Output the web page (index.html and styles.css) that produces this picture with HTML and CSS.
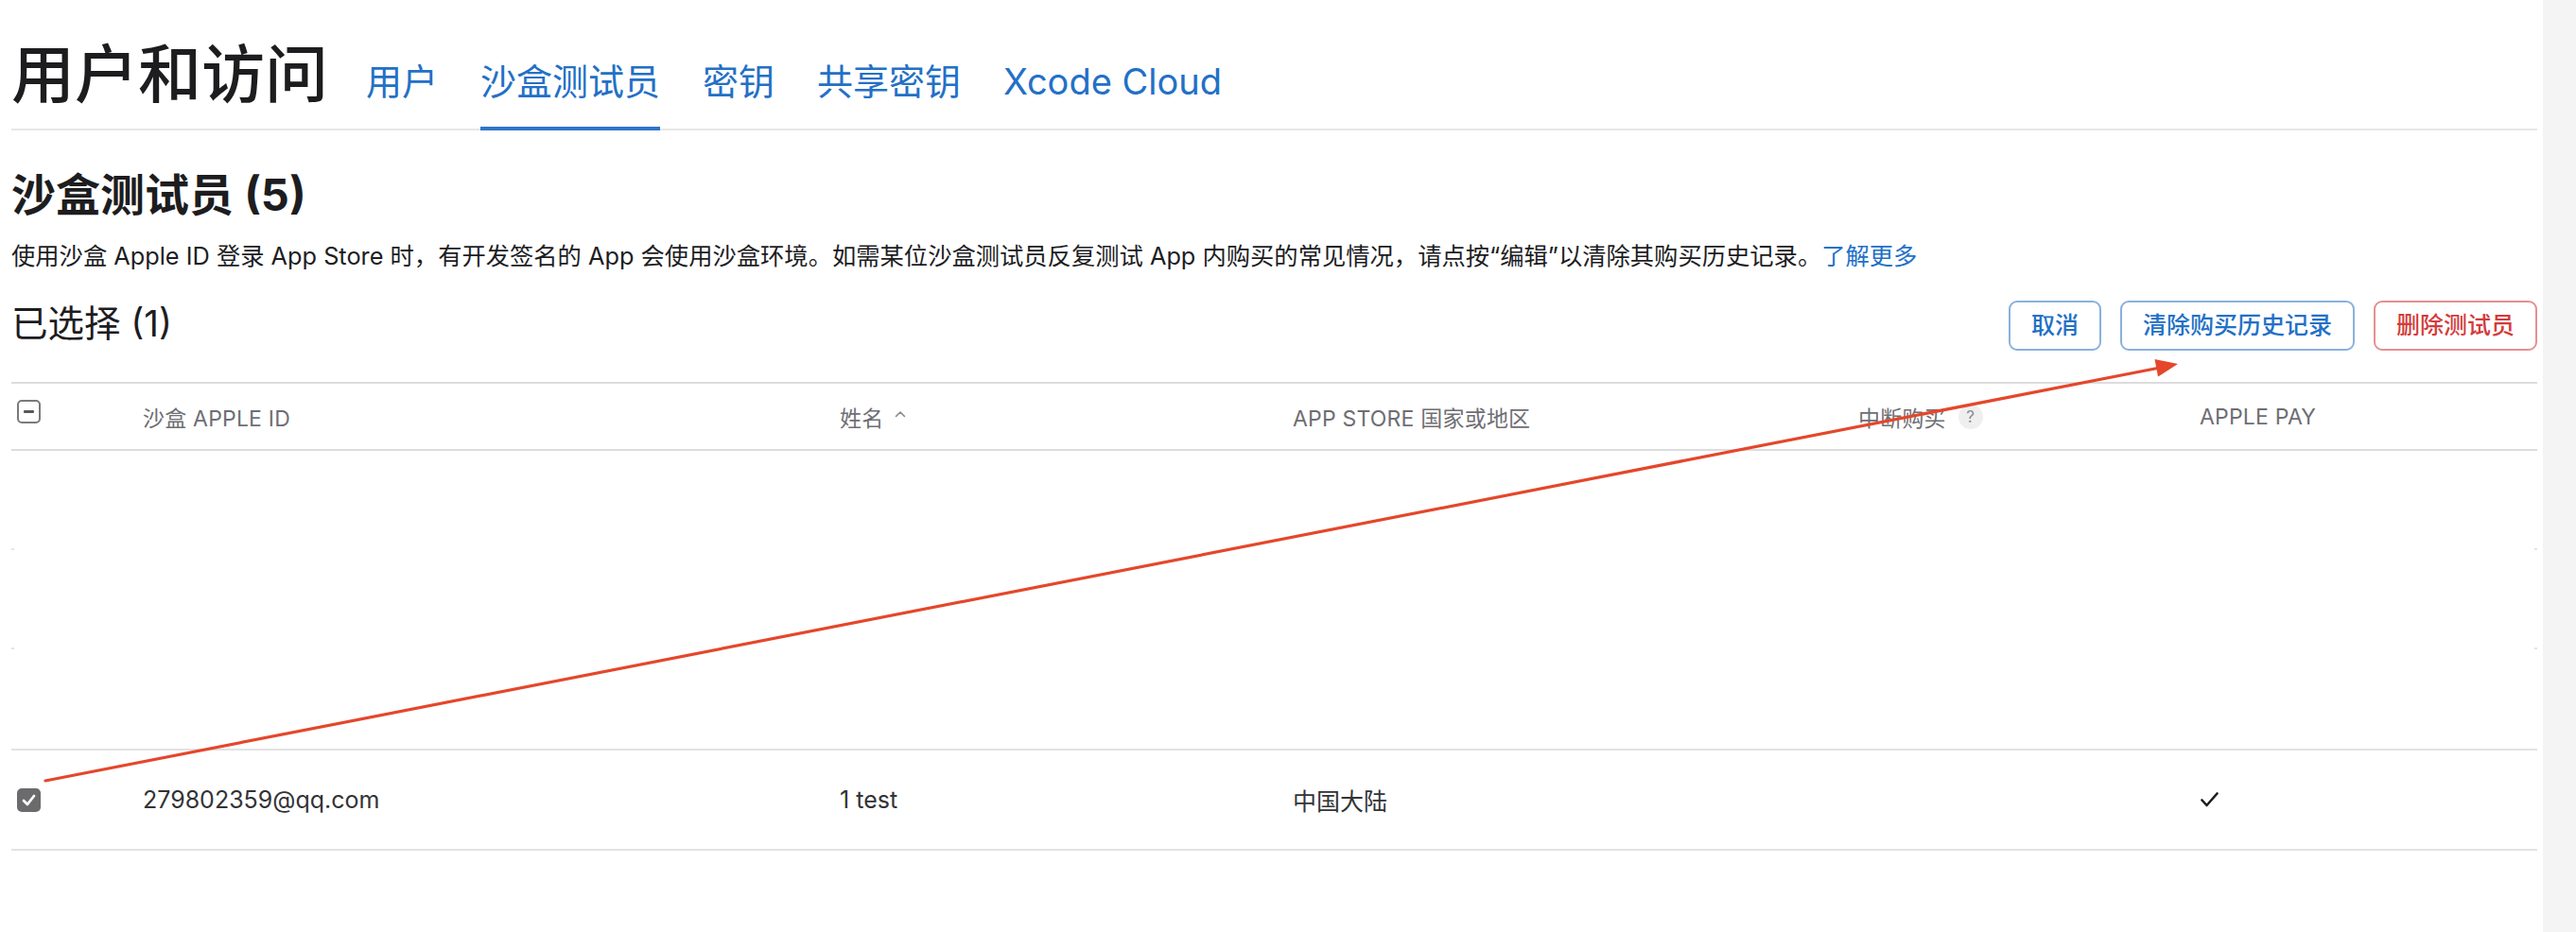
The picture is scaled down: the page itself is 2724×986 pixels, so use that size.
FILE: index.html
```html
<!DOCTYPE html>
<html lang="zh-CN">
<head>
<meta charset="utf-8">
<title>用户和访问 - 沙盒测试员</title>
<link rel="stylesheet" href="styles.css">
</head>
<body>
<div class="page">
  <main class="main">
    <nav class="nav">
      <h1 class="nav-title">用户和访问</h1>
      <a class="tab">用户</a>
      <a class="tab tab-active">沙盒测试员</a>
      <a class="tab">密钥</a>
      <a class="tab">共享密钥</a>
      <a class="tab">Xcode Cloud</a>
    </nav>

    <h2 class="section-title">沙盒测试员 (5)</h2>
    <p class="desc">使用沙盒 Apple ID 登录 App Store 时，有开发签名的 App 会使用沙盒环境。如需某位沙盒测试员反复测试 App 内购买的常见情况，请点按“编辑”以清除其购买历史记录。<a class="link">了解更多</a></p>

    <div class="toolbar">
      <div class="selected">已选择 (1)</div>
      <div class="actions">
        <button class="btn">取消</button>
        <button class="btn">清除购买历史记录</button>
        <button class="btn btn-danger">删除测试员</button>
      </div>
    </div>

    <div class="table">
      <div class="row row-head">
        <div class="cell cell-cb"><span class="cb cb-mixed"><span class="cb-bar"></span></span></div>
        <div class="cell">沙盒 Apple ID</div>
        <div class="cell">姓名<svg class="caret" width="12" height="8" viewBox="0 0 12 8"><path d="M1.5 6.5 L6 2 L10.5 6.5" fill="none" stroke="#8a8a8a" stroke-width="1.6" stroke-linecap="round" stroke-linejoin="round"/></svg></div>
        <div class="cell">App Store 国家或地区</div>
        <div class="cell">中断购买<span class="help">?</span></div>
        <div class="cell">Apple Pay</div>
      </div>
      <div class="row row-blank"></div>
      <div class="row row-blank"></div>
      <div class="row row-blank row-blank-last"></div>
      <div class="row row-data">
        <div class="cell cell-cb"><span class="cb cb-checked"><svg width="17" height="15" viewBox="0 0 17 15"><path d="M3 8 L7 12 L14 3" fill="none" stroke="#fff" stroke-width="2.8" stroke-linecap="round" stroke-linejoin="round"/></svg></span></div>
        <div class="cell">279802359@qq.com</div>
        <div class="cell">1 test</div>
        <div class="cell">中国大陆</div>
        <div class="cell"></div>
        <div class="cell"><svg class="tick" width="19" height="16" viewBox="0 0 19 16"><path d="M1.5 8.5 L6.5 14 L17.5 1.5" fill="none" stroke="#1d1d1f" stroke-width="2.6" stroke-linecap="round" stroke-linejoin="round"/></svg></div>
      </div>
    </div>
  </main>
  <aside class="rail"></aside>

  <svg class="annot" width="2724" height="986" viewBox="0 0 2724 986">
    <line x1="48" y1="826" x2="2284" y2="389" stroke="#e4472b" stroke-width="3.2" stroke-linecap="round"/>
    <polygon points="2303,385 2282,398.5 2278.5,380" fill="#e4472b"/>
  </svg>
</div>
</body>
</html>
```

FILE: styles.css
```css
html, body {
  margin: 0;
  padding: 0;
  background: #ffffff;
}

body {
  font-family: Inter, "Noto Sans CJK SC", "Noto Sans", sans-serif;
  color: #1d1d1f;
}

.page {
  position: relative;
  display: flex;
  min-height: 986px;
  overflow: hidden;
}

.main {
  flex: 1;
  padding: 0 6px 0 12px;
  min-width: 0;
}

.rail {
  width: 35px;
  background: #f4f4f5;
}

/* ---------- top navigation ---------- */
.nav {
  display: flex;
  align-items: flex-end;
  gap: 45px;
  padding-top: 39px;
  border-bottom: 2px solid #e6e6e8;
}

.nav-title {
  margin: 0 -5px 0 0;
  font-size: 67px;
  line-height: 79px;
  font-weight: 500;
  padding-bottom: 18px;
  color: #1d1d1f;
}

.tab {
  font-size: 38px;
  line-height: 45px;
  color: #2370c6;
  padding-bottom: 25px;
  border-bottom: 4px solid transparent;
  margin-bottom: -2px;
  white-space: nowrap;
}

.tab-active {
  border-bottom-color: #2f74c8;
}

/* ---------- section heading ---------- */
.section-title {
  margin: 40px 0 0;
  font-size: 47px;
  line-height: 55px;
  font-weight: 700;
}

.desc {
  margin: 20px 0 0;
  font-size: 25.3px;
  line-height: 35px;
  color: #1d1d1f;
  white-space: nowrap;
}

.link {
  color: #2370c6;
}

/* ---------- toolbar ---------- */
.toolbar {
  margin-top: 30px;
  display: flex;
  justify-content: space-between;
  align-items: center;
}

.selected {
  font-size: 38.5px;
  line-height: 44px;
  color: #1d1d1f;
  margin-bottom: 6px;
}

.actions {
  display: flex;
  gap: 20px;
}

.btn {
  font-family: inherit;
  font-size: 25px;
  line-height: 29px;
  font-weight: 500;
  padding: 10px 22px;
  border: 2px solid #8bb0df;
  border-radius: 9px;
  background: #ffffff;
  color: #2370c6;
  white-space: nowrap;
}

.btn-danger {
  border-color: #e59090;
  color: #d33b3b;
}

/* ---------- table ---------- */
.table {
  margin-top: 33px;
  border-top: 2px solid #dcdcde;
}

.row {
  display: grid;
  grid-template-columns: 139px 737px 479px 598px 361px 1fr;
  align-items: center;
}

.row-head {
  height: 71px;
  box-sizing: border-box;
  border-bottom: 2px solid #dcdcde;
  font-size: 23px;
  color: #6e6e73;
  text-transform: uppercase;
  letter-spacing: 0.2px;
}

.row-blank {
  position: relative;
  height: 105px;
}

.row-blank::before,
.row-blank::after {
  content: "";
  position: absolute;
  bottom: 0;
  width: 3px;
  height: 2px;
  background: #e4e4e6;
}

.row-blank::before {
  left: 0;
}

.row-blank::after {
  right: 0;
}

.row-blank-last {
  height: 107px;
  box-sizing: border-box;
  border-bottom: 2px solid #e2e2e4;
}

.row-blank-last::before,
.row-blank-last::after {
  display: none;
}

.row-data {
  height: 106px;
  box-sizing: border-box;
  border-bottom: 2px solid #e2e2e4;
  font-size: 25px;
  color: #333336;
}

.cell {
  display: flex;
  align-items: center;
  white-space: nowrap;
}

.cell-cb {
  padding-left: 6px;
}

.cb {
  width: 25px;
  height: 25px;
  box-sizing: border-box;
  border-radius: 5px;
  display: flex;
  align-items: center;
  justify-content: center;
}

.cb-mixed {
  border: 2px solid #7a7a7c;
  margin-bottom: 10px;
}

.cb-bar {
  width: 11px;
  height: 3px;
  border-radius: 1px;
  background: #59595b;
}

.cb-checked {
  background: #6b6b6d;
}

.caret {
  margin-left: 12px;
  margin-bottom: 6px;
}

.help {
  display: inline-flex;
  align-items: center;
  justify-content: center;
  width: 26px;
  height: 26px;
  margin-left: 13px;
  border-radius: 50%;
  background: #efeff0;
  color: #8a8a8e;
  font-size: 17px;
  text-transform: none;
}

.tick {
  margin-left: 1px;
}

/* ---------- annotation arrow overlay ---------- */
.annot {
  position: absolute;
  left: 0;
  top: 0;
  pointer-events: none;
}
```
